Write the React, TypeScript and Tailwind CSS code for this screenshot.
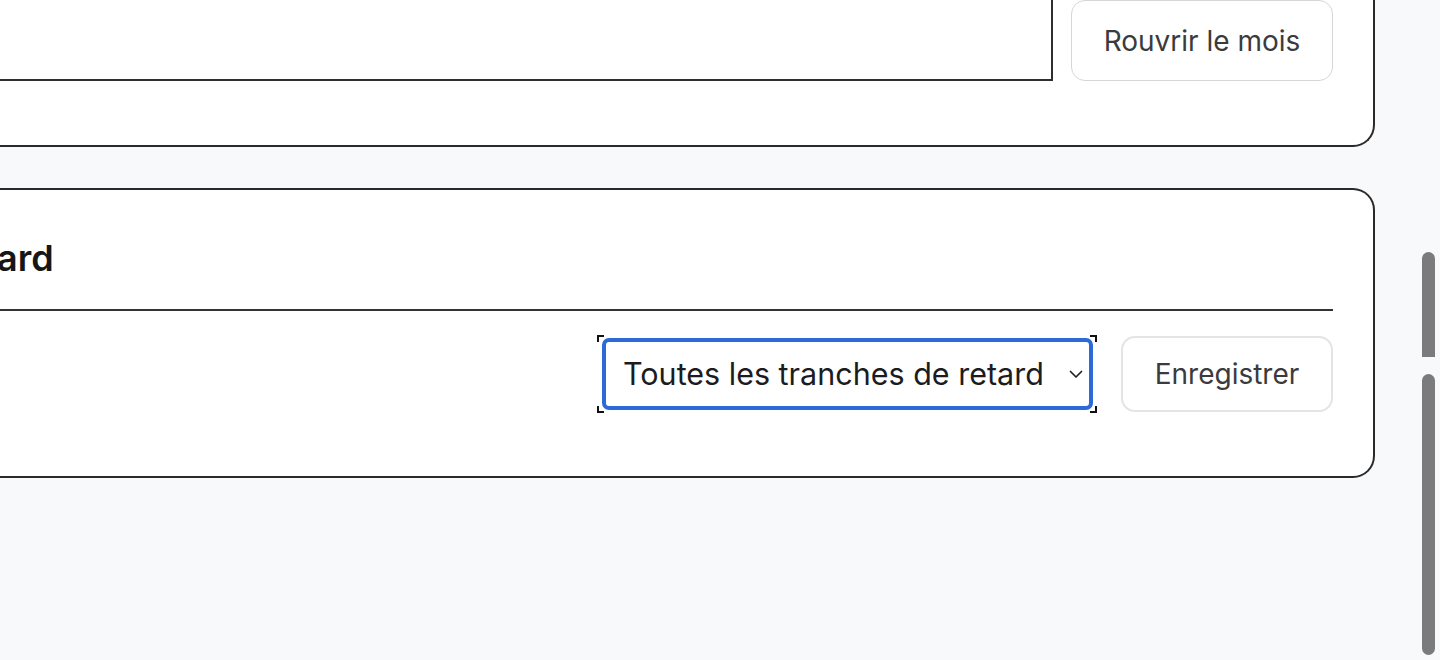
import { useState } from "react"

function Corner({ className }: { className: string }) {
  return <span className={`absolute h-[7px] w-[7px] border-[#111] ${className}`} />
}

function Chevron() {
  return (
    <svg width="14" height="9" viewBox="0 0 14 9" fill="none" className="shrink-0">
      <path d="M1.5 1.5 7 7 12.5 1.5" stroke="#222" strokeWidth="1.7" strokeLinecap="round" strokeLinejoin="round" />
    </svg>
  )
}

export default function App() {
  const [tranche] = useState("Toutes les tranches de retard")

  return (
    <div className="relative h-[660px] w-[1440px] overflow-hidden bg-[#f8f9fb] font-['Inter',sans-serif]">
      <div className="flex w-[1375px] flex-col gap-[41px]">
        {/* mois */}
        <section className="rounded-br-[22px] border-r-2 border-b-2 border-[#2a2a2a] bg-white pr-[40px] pb-[64px]">
          <div className="flex items-stretch gap-[18px]">
            <div className="h-[81px] flex-1 border-r-2 border-b-2 border-[#2e2e2e]" />
            <button className="h-[81px] w-[262px] rounded-[14px] border-[1.5px] border-[#d6d6d6] bg-white text-[28px] text-[#3b3b3d]">
              Rouvrir le mois
            </button>
          </div>
        </section>

        {/* tranches de retard */}
        <section className="rounded-r-[22px] border-y-2 border-r-2 border-[#2a2a2a] bg-white pr-[40px] pb-[64px]">
          <div className="border-b-2 border-[#333] pt-[44px] pb-[27px]">
            <h2 className="-ml-[275px] text-[36px] leading-[48px] font-semibold text-[#161616]">Tranches de retard</h2>
          </div>
          <div className="flex items-center justify-end gap-[28px] pt-[25px]">
            <div className="relative">
              <Corner className="-top-[3px] -left-[5px] border-t-2 border-l-2" />
              <Corner className="-top-[3px] -right-[4px] border-t-2 border-r-2" />
              <Corner className="-bottom-[3px] -left-[5px] border-b-2 border-l-2" />
              <Corner className="-bottom-[3px] -right-[4px] border-b-2 border-r-2" />
              <div className="flex h-[72px] w-[491px] items-center justify-between rounded-[7px] border-4 border-[#2d69d8] bg-white pr-[6px] pl-[17px]">
                <span className="text-[30.5px] text-[#1c1c1e]">{tranche}</span>
                <Chevron />
              </div>
            </div>
            <button className="h-[76px] w-[212px] rounded-[14px] border-2 border-[#e4e4e6] bg-white text-[28px] text-[#3b3b3d]">
              Enregistrer
            </button>
          </div>
        </section>
      </div>

      {/* barre de défilement */}
      <div className="absolute top-[252px] left-[1422px] h-[105px] w-[13px] rounded-t-full bg-[#7b7b7e]" />
      <div className="absolute top-[374px] left-[1422px] h-[281px] w-[13px] rounded-full bg-[#7b7b7e]" />
    </div>
  )
}
